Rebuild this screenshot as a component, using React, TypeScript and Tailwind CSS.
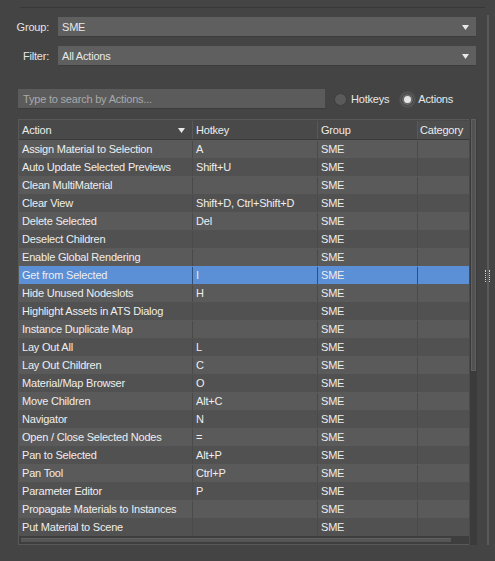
import React from "react";

const rows: [string, string][] = [
  ["Assign Material to Selection", "A"],
  ["Auto Update Selected Previews", "Shift+U"],
  ["Clean MultiMaterial", ""],
  ["Clear View", "Shift+D, Ctrl+Shift+D"],
  ["Delete Selected", "Del"],
  ["Deselect Children", ""],
  ["Enable Global Rendering", ""],
  ["Get from Selected", "I"],
  ["Hide Unused Nodeslots", "H"],
  ["Highlight Assets in ATS Dialog", ""],
  ["Instance Duplicate Map", ""],
  ["Lay Out All", "L"],
  ["Lay Out Children", "C"],
  ["Material/Map Browser", "O"],
  ["Move Children", "Alt+C"],
  ["Navigator", "N"],
  ["Open / Close Selected Nodes", "="],
  ["Pan to Selected", "Alt+P"],
  ["Pan Tool", "Ctrl+P"],
  ["Parameter Editor", "P"],
  ["Propagate Materials to Instances", ""],
  ["Put Material to Scene", ""],
];

const SELECTED = 7;

function Arrow() {
  return (
    <svg width="7" height="5" viewBox="0 0 7 5" className="shrink-0">
      <path d="M0 0 H7 L3.5 5 Z" fill="#e8e8e8" />
    </svg>
  );
}

function Dropdown({ label, value }: { label: string; value: string }) {
  return (
    <div className="flex items-center h-[20px]">
      <div className="w-[49px] text-right text-[#e4e4e4]">{label}</div>
      <div className="ml-[9px] w-[418px] h-[20px] bg-[#5f5f5f] border-b border-[#3c3c3c] flex items-center justify-between pl-[4px] pr-[7px] pt-[1px] text-[#e8e8e8]">
        <span>{value}</span>
        <Arrow />
      </div>
    </div>
  );
}

function Radio({ checked, label }: { checked?: boolean; label: string }) {
  return (
    <div className="flex items-center gap-[4px]">
      <div
        className={
          checked
            ? "w-[13px] h-[13px] rounded-full bg-[#6a6a6a] border border-[#3e3e3e] flex items-center justify-center shadow-[0_0_3px_#888]"
            : "w-[13px] h-[13px] rounded-full bg-[#5a5a5a] border border-[#3e3e3e]"
        }
      >
        {checked && <div className="w-[7px] h-[7px] rounded-full bg-[#e6e6e6]" />}
      </div>
      <span className="text-[#e8e8e8]">{label}</span>
    </div>
  );
}

export default function App() {
  return (
    <div
      className="w-[495px] h-[561px] bg-[#444444] overflow-hidden text-[11px] leading-none tracking-[-0.2px]"
      style={{ fontFamily: '"Liberation Sans", Arial, sans-serif' }}
    >
      <div className="h-[8px] ml-[20px] mr-[10px] border-b border-[#383838]" />
      <div className="flex">
        {/* Main panel */}
        <div className="w-[484px] pt-[9px]">
          <div className="flex flex-col gap-[9px]">
            <Dropdown label="Group:" value="SME" />
            <Dropdown label="Filter:" value="All Actions" />
          </div>

          <div className="mt-[23px] ml-[18px] flex items-center h-[20px]">
            <div className="w-[307px] h-[20px] bg-[#5b5b5b] border-b border-[#3c3c3c] flex items-center pl-[5px] pt-[1px] text-[#a9a9a9]">
              Type to search by Actions...
            </div>
            <div className="ml-[9px] flex items-center gap-[12px]">
              <Radio label="Hotkeys" />
              <Radio checked label="Actions" />
            </div>
          </div>

          {/* Table */}
          <div className="mt-[10px] ml-[18px] flex">
            <div className="w-[451px] border border-[#585858] border-r-0 flex flex-col">
              <div className="flex h-[20px] pt-[1px] bg-[#494949] border-b border-[#3a3a3a] text-[#ececec]">
                <div className="w-[174px] flex items-center justify-between pl-[3px] pr-[7px] border-r border-[#585858]">
                  <span>Action</span>
                  <Arrow />
                </div>
                <div className="w-[125px] flex items-center pl-[3px] border-r border-[#585858]">Hotkey</div>
                <div className="w-[100px] flex items-center pl-[3px] border-r border-[#585858]">Group</div>
                <div className="flex-1 flex items-center pl-[2px] bg-[#4e4e4e]">Category</div>
              </div>
              <div className="flex flex-col">
                {rows.map(([action, key], i) => {
                  const sel = i === SELECTED;
                  const bg = sel ? "bg-[#5b8fd6]" : i % 2 === 0 ? "bg-[#5a5a5a]" : "bg-[#515151]";
                  const sep = sel ? "border-[#2f4f7c]" : "border-[#4a4a4a]";
                  return (
                    <div key={action} className={`flex h-[18px] pt-[1px] ${bg} text-[#eeeeee]`}>
                      <div className={`w-[174px] flex items-center pl-[3px] border-r ${sep} whitespace-nowrap`}>{action}</div>
                      <div className={`w-[125px] flex items-center pl-[3px] border-r ${sep} whitespace-nowrap`}>{key}</div>
                      <div className={`w-[100px] flex items-center pl-[3px] border-r ${sep}`}>SME</div>
                      <div className="flex-1" />
                    </div>
                  );
                })}
              </div>
              {/* Horizontal scrollbar */}
              <div className="h-[8px] bg-[#3e3e3e] flex items-center">
                <div className="w-[430px] h-[4px] ml-[2px] bg-[#555555] border-t border-[#606060]" />
              </div>
            </div>
            {/* Vertical scrollbar */}
            <div className="w-[8px] flex flex-col bg-[#3b3b3b] border-l border-[#4a4a4a]">
              <div className="h-[252px] mx-[1px] bg-[#525252] border border-[#606060]" />
            </div>
          </div>
        </div>

        {/* Splitter */}
        <div className="flex-1 flex flex-col items-center pt-[7px] pr-[3px]">
          <div className="relative w-[2px] h-[530px] bg-[#5a5a5a]">
            <div className="absolute left-[-2px] top-[255px] w-[5px] h-[12px] border-x border-dotted border-[#cfcfcf]" />
          </div>
        </div>
      </div>
    </div>
  );
}
